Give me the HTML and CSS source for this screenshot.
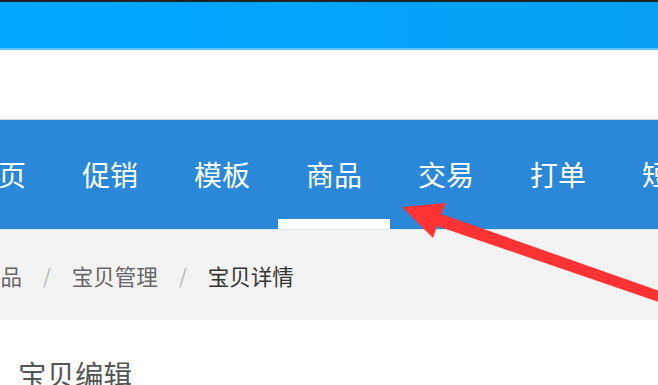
FILE: index.html
```html
<!DOCTYPE html>
<html lang="zh-CN">
<head>
<meta charset="utf-8">
<link rel="stylesheet" href="styles.css">
</head>
<body>
<div class="page">
  <div class="topbar"></div>
  <div class="header"></div>
  <nav class="nav">
    <ul class="nav-list">
      <li class="nav-item">首页</li>
      <li class="nav-item">促销</li>
      <li class="nav-item">模板</li>
      <li class="nav-item active">商品</li>
      <li class="nav-item">交易</li>
      <li class="nav-item">打单</li>
      <li class="nav-item">短信</li>
    </ul>
  </nav>
  <div class="crumbs">
    <span class="crumb">商品</span>
    <span class="sep">/</span>
    <span class="crumb">宝贝管理</span>
    <span class="sep">/</span>
    <span class="crumb current">宝贝详情</span>
  </div>
  <div class="content">
    <h2 class="title">宝贝编辑</h2>
  </div>
  <svg class="arrow" width="658" height="385" viewBox="0 0 658 385">
    <polygon points="402,207 446,203 441,214 662,292 659,302 437,226 433,238" fill="#ff3334"/>
  </svg>
</div>
</body>
</html>
```

FILE: styles.css
```css
* { box-sizing: border-box; }
html, body {
  margin: 0;
  padding: 0;
  width: 658px;
  height: 385px;
  overflow: hidden;
  background: #fff;
  font-family: "Noto Sans CJK SC", "Noto Sans", sans-serif;
}
.page {
  position: relative;
  width: 658px;
  height: 385px;
  overflow: hidden;
}
.topbar {
  height: 50px;
  border-top: 2px solid #222;
  border-bottom: 2px solid #5ec2fb;
  background: linear-gradient(to right, #00a6ff, #05a0f1);
}
.header {
  height: 70px;
  background: #fff;
  border-bottom: 1px solid #d3d9df;
}
.nav {
  height: 110px;
  background: #2b88d8;
  overflow: hidden;
  border-bottom: 1px solid #dbe6f0;
}
.nav-list {
  display: flex;
  list-style: none;
  margin: 0 0 0 -58px;
  padding: 0;
  height: 100%;
}
.nav-item {
  flex: 0 0 112px;
  display: flex;
  align-items: center;
  justify-content: center;
  height: 100%;
  padding-bottom: 2px;
  color: #fff;
  font-size: 28px;
  white-space: nowrap;
}
.nav-item.active {
  box-shadow: inset 0 -10px 0 #fff;
}
.crumbs {
  height: 90px;
  background: #f3f3f3;
  display: flex;
  align-items: center;
  margin-left: -21px;
  font-size: 21.5px;
  color: #666;
  white-space: nowrap;
}
.sep {
  color: #b5b5b5;
  padding: 0 21px;
  font-size: 20px;
}
.crumb.current {
  color: #333;
}
.content {
  padding: 34px 0 0 18px;
}
.title {
  margin: 0;
  font-weight: normal;
  font-size: 28.5px;
  color: #555;
  line-height: 40px;
}
.arrow {
  position: absolute;
  left: 0;
  top: 0;
}
```
